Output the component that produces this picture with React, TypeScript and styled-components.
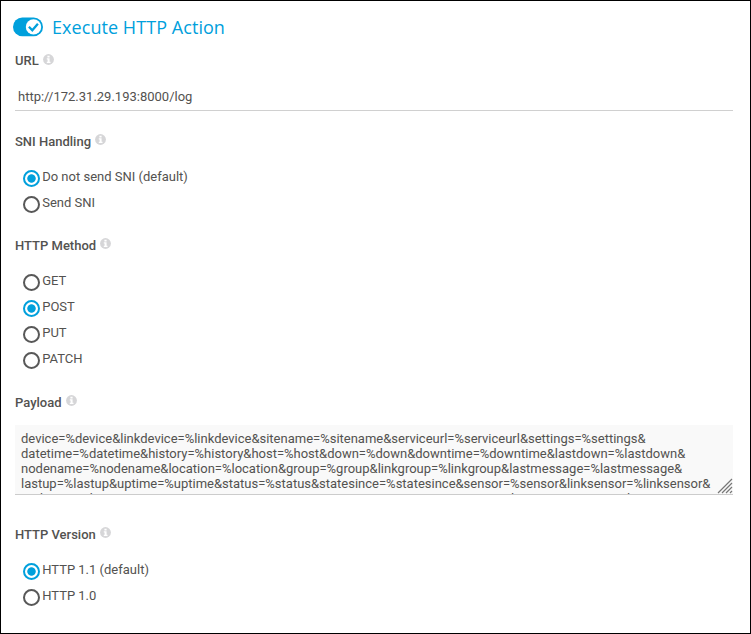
import React, { useState } from "react";
import styled, { createGlobalStyle } from "styled-components";

const GlobalStyle = createGlobalStyle`
  *, *::before, *::after { box-sizing: border-box; }
  body { margin: 0; background: #fff; }
`;

const Panel = styled.main`
  width: 751px;
  height: 634px;
  padding: 14px 17px 0 14px;
  border: 1px solid #000;
  background: #fff;
  color: #535250;
  font: 400 13px/20px Roboto, sans-serif;
  overflow: hidden;
`;

const Header = styled.header`
  display: flex;
  align-items: center;
  height: 24px;
  margin-left: -2px;
`;

const Title = styled.h1`
  margin: 0 0 0 9px;
  color: #00a0dc;
  font: 400 18px/24px "Open Sans", sans-serif;
  letter-spacing: 0.06px;
  white-space: nowrap;
`;

const Field = styled.section<{ $gap: number }>`
  margin-top: ${(p) => p.$gap}px;
`;

const Label = styled.div`
  display: flex;
  align-items: center;
  gap: 4px;
  height: 20px;
  font-weight: 500;
  white-space: nowrap;
`;

const InfoSvg = styled.svg<{ $raise: number }>`
  flex: none;
  margin-top: -${(p) => p.$raise}px;
`;

const UrlInput = styled.input`
  display: block;
  width: 718px;
  height: 26px;
  margin-top: 14px;
  padding: 0 3px 3px;
  border: 0;
  border-bottom: 1px solid #d0d0d0;
  outline: 0;
  background: transparent;
  color: inherit;
  font: inherit;
`;

const Options = styled.div`
  margin: 13px 0 0 8px;
`;

const Option = styled.label`
  display: flex;
  align-items: center;
  gap: 2.2px;
  height: 26px;
`;

const Radio = styled.input`
  appearance: none;
  flex: none;
  width: 17px;
  height: 17px;
  margin: 0;
  border: 2px solid #585858;
  border-radius: 50%;
  background: #fff;
  &:checked {
    border-color: #00a0dc;
    background: radial-gradient(circle, #00a0dc 0 3.8px, #fff 4.6px);
  }
`;

const OptionText = styled.span`
  margin-top: -3px;
  white-space: nowrap;
`;

const PayloadBox = styled.div`
  position: relative;
  width: 718px;
  height: 70px;
  margin-top: 12px;
  border-bottom: 1px solid #ccc;
  background: #f9f9f9;
`;

const PayloadText = styled.div`
  height: 69px;
  padding: 6px 6px 0;
  overflow: hidden;
  line-height: 15px;
  letter-spacing: -0.003px;
  white-space: pre;
`;

const Grip = styled.svg`
  position: absolute;
  right: 0;
  bottom: 0;
`;

const Toggle = () => (
  <svg width="30" height="20" viewBox="0 0 30 20">
    <rect x="0" y="0.6" width="30" height="18.6" rx="9.3" fill="#00a0dc" />
    <circle cx="20.5" cy="9.9" r="7.7" fill="#fff" />
    <path d="M15.9 9.8l3.4 3.4 5.6-6.4" fill="none" stroke="#00a0dc" strokeWidth="2.3" />
  </svg>
);

const Info = ({ raise = 6 }: { raise?: number }) => (
  <InfoSvg $raise={raise} width="11" height="11" viewBox="0 0 11 11">
    <circle cx="5.5" cy="5.5" r="5.4" fill="#d6d6d8" />
    <path d="M4.4 1.7h2.2v1.7H4.4zM3.8 4.2h2.8v3.5h.9V9H3.8V7.7h.8V5.5h-.8z" fill="#fff" />
  </InfoSvg>
);

const payload = [
  "device=%device&linkdevice=%linkdevice&sitename=%sitename&serviceurl=%serviceurl&settings=%settings&",
  "datetime=%datetime&history=%history&host=%host&down=%down&downtime=%downtime&lastdown=%lastdown&",
  "nodename=%nodename&location=%location&group=%group&linkgroup=%linkgroup&lastmessage=%lastmessage&",
  "lastup=%lastup&uptime=%uptime&status=%status&statesince=%statesince&sensor=%sensor&linksensor=%linksensor&",
  "probe=%probe&priority=%priority&commentssensor=%commentssensor&commentsdevice=%commentsdevice",
].join("\n");

interface GroupProps {
  name: string;
  items: string[];
  initial: number;
  gap: number;
}

function RadioGroup({ name, items, initial, gap }: GroupProps) {
  const [selected, setSelected] = useState(initial);
  return (
    <Field $gap={gap}>
      <Label>{name}<Info /></Label>
      <Options>
        {items.map((item, i) => (
          <Option key={item}>
            <Radio type="radio" name={name} checked={selected === i} onChange={() => setSelected(i)} />
            <OptionText>{item}</OptionText>
          </Option>
        ))}
      </Options>
    </Field>
  );
}

export default function App() {
  return (
    <>
      <GlobalStyle />
      <Panel>
        <Header><Toggle /><Title>Execute HTTP Action</Title></Header>
        <Field $gap={12}>
          <Label>URL<Info raise={4} /></Label>
          <UrlInput defaultValue="http://172.31.29.193:8000/log" />
        </Field>
        <RadioGroup name="SNI Handling" items={["Do not send SNI (default)", "Send SNI"]} initial={0} gap={21} />
        <RadioGroup name="HTTP Method" items={["GET", "POST", "PUT", "PATCH"]} initial={1} gap={19} />
        <Field $gap={20}>
          <Label>Payload<Info /></Label>
          <PayloadBox>
            <PayloadText>{payload}</PayloadText>
            <Grip width="16" height="16" viewBox="0 0 16 16" stroke="#777" strokeWidth="1.2">
              <path d="M1 15L15 1M5 15L15 5M9 15L15 9M13 15L15 13" />
            </Grip>
          </PayloadBox>
        </Field>
        <RadioGroup name="HTTP Version" items={["HTTP 1.1 (default)", "HTTP 1.0"]} initial={0} gap={30} />
      </Panel>
    </>
  );
}
